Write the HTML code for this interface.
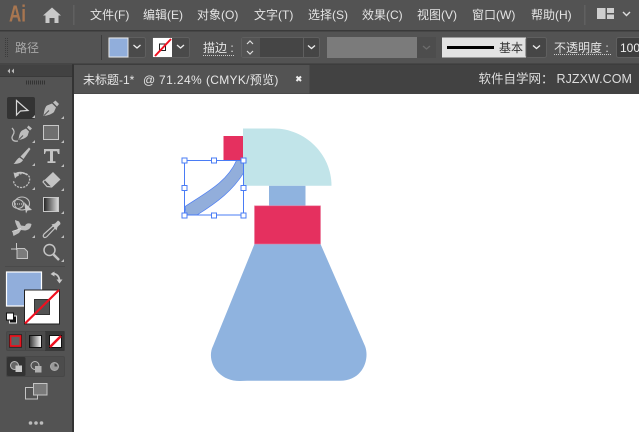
<!DOCTYPE html>
<html><head><meta charset="utf-8">
<style>
html,body{margin:0;padding:0;background:#fff;width:639px;height:432px;overflow:hidden}
svg{display:block}
text{font-family:"Liberation Sans","Noto Sans CJK SC",sans-serif}
</style></head><body>
<svg width="639" height="432" viewBox="0 0 639 432" xmlns="http://www.w3.org/2000/svg">
<defs><linearGradient id="g" x1="0" x2="1"><stop offset="0" stop-color="#222"/><stop offset="1" stop-color="#ddd"/></linearGradient>
<linearGradient id="g2" x1="0" x2="1"><stop offset="0" stop-color="#333"/><stop offset="1" stop-color="#fff"/></linearGradient></defs>
<!-- base -->
<rect width="639" height="432" fill="#fff"/>
<rect width="639" height="30" fill="#535353"/>
<rect y="30" width="639" height="1.5" fill="#3a3a3a"/>
<rect y="31.5" width="639" height="32" fill="#535353"/>
<rect y="63.5" width="639" height="1" fill="#383838"/>
<rect y="64.5" width="639" height="29.5" fill="#424242"/>
<rect x="73.5" y="65" width="236" height="28.5" fill="#535353"/>
<rect x="0" y="64.5" width="72" height="368" fill="#535353"/>
<rect x="0" y="65" width="72" height="11" fill="#424242"/>
<rect x="0" y="76" width="72" height="1" fill="#3a3a3a"/>
<rect x="72" y="64.5" width="2" height="368" fill="#333"/>

<!-- menu bar -->
<text x="9" y="21.500" font-size="23" font-weight="bold" textLength="17" lengthAdjust="spacingAndGlyphs" fill="#a87650">Ai</text>
<path d="M43 15.500 L52 7.500 L61 15.500 L58.500 15.500 V23 H54.500 V18 H49.500 V23 H45.500 V15.500 Z" fill="#c8c8c8"/>
<rect x="73" y="5" width="1.500" height="20" fill="#606060"/>
<g font-size="12" fill="#e4e4e4">
<text x="90" y="19">文件(F)</text>
<text x="143" y="19">编辑(E)</text>
<text x="197" y="19">对象(O)</text>
<text x="254" y="19">文字(T)</text>
<text x="308" y="19">选择(S)</text>
<text x="362" y="19">效果(C)</text>
<text x="417" y="19">视图(V)</text>
<text x="472" y="19">窗口(W)</text>
<text x="531" y="19">帮助(H)</text>
</g>
<rect x="584" y="5" width="1.500" height="20" fill="#606060"/>
<path d="M597 8h8.500v11h-8.500zM607 8h7v5h-7zM607 14.500h7v4.500h-7z" fill="#cfcfcf"/>
<path d="M623 12 l3.500 3.500 l3.500 -3.500" fill="none" stroke="#ddd" stroke-width="1.400"/>

<!-- control bar -->
<path d="M5.500 38v19M7.500 38v19" stroke="#3c3c3c" stroke-width="1" stroke-dasharray="1 1"/>
<text x="15" y="52" font-size="12" fill="#a8a8a8">路径</text>
<rect x="101" y="35" width="1" height="25" fill="#3d3d3d"/>
<rect x="108.500" y="37.500" width="37" height="20" rx="2" fill="#4a4a4a" stroke="#5f5f5f"/>
<rect x="109" y="38" width="19" height="19" fill="#91aedb" stroke="#e8e8e8"/>
<path d="M133.500 45 l3.500 3 l3.500 -3" fill="none" stroke="#eee" stroke-width="1.300"/>
<rect x="152.500" y="37.500" width="37" height="20" rx="2" fill="#4a4a4a" stroke="#5f5f5f"/>
<rect x="153" y="38" width="19" height="19" fill="#fff"/>
<rect x="159.500" y="44" width="6" height="6.500" fill="none" stroke="#222" stroke-width="1"/>
<path d="M155 56 L171 39" stroke="#f01020" stroke-width="2"/>
<path d="M177 45 l3.500 3 l3.500 -3" fill="none" stroke="#eee" stroke-width="1.300"/>
<text x="203" y="52" font-size="12" fill="#e4e4e4">描边 :</text>
<path d="M203 55.500h32" stroke="#ccc" stroke-width="1" stroke-dasharray="1 1"/>
<rect x="241.500" y="37.500" width="78" height="20" rx="2" fill="#454545" stroke="#5f5f5f"/>
<rect x="242" y="38" width="18" height="19" fill="#535353"/>
<rect x="303" y="38" width="1" height="19" fill="#5f5f5f"/>
<path d="M247 44l3-3 3 3M247 51l3 3 3-3" fill="none" stroke="#ddd" stroke-width="1.200"/>
<path d="M308 45.500 l3.500 3 l3.500 -3" fill="none" stroke="#eee" stroke-width="1.300"/>
<rect x="327" y="37" width="90" height="21" fill="#7b7b7b"/>
<rect x="417" y="37" width="19" height="21" fill="#4d4d4d"/>
<path d="M423 46l3.500 3 3.500-3" fill="none" stroke="#6c6c6c" stroke-width="1.300"/>
<rect x="442" y="37.500" width="84" height="20" fill="#e2e2e2"/>
<rect x="526" y="37.500" width="20.500" height="20" rx="2" fill="#464646" stroke="#5f5f5f"/>
<rect x="447" y="46" width="47" height="3" fill="#000"/>
<text x="499" y="52" font-size="12" fill="#333">基本</text>
<path d="M533 45.500l3.500 3 3.500-3" fill="none" stroke="#eee" stroke-width="1.300"/>
<text x="554" y="52" font-size="12" fill="#e4e4e4">不透明度 :</text>
<path d="M554 54.500h57" stroke="#ccc" stroke-width="1" stroke-dasharray="1 1"/>
<rect x="616.500" y="37.500" width="30" height="20" rx="2" fill="#3e3e3e" stroke="#5f5f5f"/>
<text x="620" y="52" font-size="12" fill="#eee">100%</text>

<!-- tab bar -->
<g font-size="12" fill="#e6e6e6">
<text x="83" y="84">未标题-1*</text>
<text x="143" y="84">@</text>
<text x="159" y="84" letter-spacing=".4">71.24%</text>
<text x="206" y="84" letter-spacing=".3">(CMYK/预览)</text>
</g>
<path d="M296.500 76.500l4.500 4.500M301 76.500l-4.500 4.500" stroke="#eee" stroke-width="2"/>
<text x="478.500" y="83" font-size="12.500" fill="#dedede">软件自学网：</text>
<text x="556.500" y="83" font-size="12.500" letter-spacing=".05" fill="#dedede">RJZXW.COM</text>

<!-- toolbar head -->
<path d="M10 68.500l-2.500 2.500 2.500 2.500zM14 68.500l-2.500 2.500 2.500 2.500z" fill="#bbb"/>
<path d="M26.500 80.500v4M28.500 80.500v4M30.500 80.500v4M32.500 80.500v4M34.500 80.500v4M36.500 80.500v4M38.500 80.500v4M40.500 80.500v4M42.500 80.500v4M44.500 80.500v4" stroke="#333" stroke-width="1"/>

<!-- tools -->
<rect x="7" y="97" width="28" height="22" rx="2" fill="#333"/>
<path d="M16.500 100.500 L16.500 115 L20.500 111 L28 110.500 Z" fill="none" stroke="#d8d8d8" stroke-width="1.200"/>
<g fill="#bdbdbd">
<path d="M35 115l-3 3h3z M64 116l-3 3h3z M35 140l-3 3h3z M64 140l-3 3h3z M35 163l-3 3h3z M64 164l-3 3h3z M35 187l-3 3h3z M64 188l-3 3h3z M64 211l-3 3h3z M35 235l-3 3h3z M64 235l-3 3h3z M64 259l-3 3h3z"/>
</g>
<!-- pen -->
<path d="M43.500 116 C44 111 45 107 47 105.500 L52 103.500 L56 107.500 L54 112 C52 114 48 115.500 43.500 116Z" fill="#bdbdbd"/>
<path d="M53 102.500 L55.500 100.500 L59 104 L57 106.500Z" fill="#bdbdbd"/>
<path d="M44 115.500 l5-5" stroke="#535353" stroke-width="1"/>
<!-- curvature pen -->
<path d="M18.500 140 C19 135 20 132 22 130.500 L26 128.500 L29 131.500 L27.500 136 C25 138.500 22 139.500 18.500 140Z" fill="#bdbdbd"/>
<path d="M27 127.500 L28.500 125.500 L32 128.500 L30 130.500Z" fill="#bdbdbd"/>
<path d="M19 139.500 l4-4" stroke="#535353" stroke-width="1"/>
<path d="M18 141c-6 1-7-3-5-6 2-3 1-5-1-7" fill="none" stroke="#bdbdbd" stroke-width="1.300"/>
<!-- rect tool -->
<rect x="43.500" y="125.500" width="15" height="14" fill="#6f6f6f" stroke="#c8c8c8" stroke-width="1"/>
<!-- brush -->
<path d="M29 147.500l1.500 1.500 -7 10 -3-2.500z" fill="#c0c0c0"/>
<path d="M19.500 157.500l3.500 2.500c-1 2.500-4.500 4-9.500 4 2-1.500 3-5 6-6.500z" fill="#c0c0c0"/>
<!-- type -->
<path d="M44 149h15.500v5h-1.500l-1-2.800h-4v10h2.500v1.800h-8v-1.800h2.500v-10h-4l-1 2.800h-1z" fill="#c4c4c4"/>
<!-- rotate -->
<path d="M17 176c4-4 11-3.500 12.500 1.500 1 5-3 10-8 10-5 0-7.500-3-8-6.500" fill="none" stroke="#bdbdbd" stroke-width="1.300" stroke-dasharray="2.200 1"/>
<path d="M13.500 172.500l6 1 -4.500 5z" fill="#c4c4c4"/>
<path d="M16 173.500c3-1.500 8-1.500 11 1.500" fill="none" stroke="#c4c4c4" stroke-width="1.500"/>
<!-- eraser -->
<path d="M53 172l7.500 7.500 -8.500 8 -7.500-7.500z" fill="#c4c4c4"/>
<path d="M44.500 180l-1.500 2 4 4.500 5 .5" fill="none" stroke="#c4c4c4" stroke-width="1.200"/>
<!-- shape builder -->
<ellipse cx="18" cy="204" rx="5.500" ry="4.500" fill="none" stroke="#bdbdbd" stroke-width="1.100"/>
<ellipse cx="22" cy="203.500" rx="7.500" ry="6.500" fill="none" stroke="#bdbdbd" stroke-width="1.100"/>
<path d="M15 204h8" stroke="#ddd" stroke-width="1" stroke-dasharray="1 1"/>
<path d="M24 202l8 8 -4.500 .5 -1.500 3z" fill="#c8c8c8"/>
<!-- gradient -->
<rect x="43.500" y="197.500" width="15" height="14" fill="url(#g)" stroke="#c8c8c8" stroke-width="1"/>
<!-- puppet warp -->
<path d="M12.500 232 L18 229 C17 226 15 223 15 220 L19 221.500 L21 225.500 L25 226 C26 223 29 223 31.500 224 C31 227 30 229 27 230 C25 231 23 230 21 230 L19 233 L13.500 236 Z" fill="#bdbdbd"/>
<path d="M12 231.500l9-3" stroke="#ddd" stroke-width=".8"/>
<!-- eyedropper -->
<path d="M53 226l-9 8c-1 1.500-1 2.800 0 3.300 1 .5 2 .2 3-.8l9-9.500z" fill="none" stroke="#c4c4c4" stroke-width="1.200"/>
<path d="M51.500 224.500l3.500-1 3-3 2 1.500 .5 2-3 3-1 3.500z" fill="#c4c4c4"/>
<!-- artboard -->
<path d="M11 249h7M16.500 243v7" stroke="#c8c8c8" stroke-width="1"/>
<path d="M17 248.500h7.500l3 3v7h-10.500z" fill="#7b7b7b" stroke="#c4c4c4" stroke-width="1"/>
<!-- zoom -->
<circle cx="49.500" cy="250" r="5.500" fill="none" stroke="#c4c4c4" stroke-width="1.500"/>
<path d="M53.500 254.500l5.500 5.500" stroke="#c4c4c4" stroke-width="2.500"/>
<rect x="5" y="266" width="60" height="1" fill="#4a4a4a"/>

<!-- fill and stroke -->
<rect x="6.500" y="272" width="35" height="34" fill="#91aedb" stroke="#fff" stroke-width="1.200"/>
<rect x="24.500" y="290" width="35" height="34" fill="#fff" stroke="#222" stroke-width="1"/>
<rect x="34.500" y="299.500" width="15" height="15" fill="#535353" stroke="#333" stroke-width="1"/>
<path d="M25 323.500L59 290" stroke="#f01020" stroke-width="2.200"/>
<path d="M52 273.500c4 0 7 2 7.500 7" fill="none" stroke="#c8c8c8" stroke-width="1.800"/>
<path d="M50.500 274l4-2.500v5zM56.500 279.500h6l-3 4z" fill="#c8c8c8"/>
<rect x="9.500" y="316" width="7" height="7" fill="#111" stroke="#eee" stroke-width="1"/>
<rect x="6.500" y="313" width="7" height="7" fill="#fff" stroke="#111" stroke-width="1"/>

<!-- mode buttons -->
<rect x="6.500" y="331.500" width="58" height="19" rx="1.500" fill="#4c4c4c" stroke="#474747"/>
<rect x="45" y="331" width="19.500" height="20" fill="#383838"/>
<rect x="25" y="332" width=".8" height="18" fill="#414141"/><rect x="45" y="332" width=".8" height="18" fill="#414141"/>
<rect x="9" y="334.500" width="13" height="13" fill="#111"/>
<rect x="10.500" y="336" width="10" height="10" fill="#606060" stroke="#e8141f" stroke-width="1.800"/>
<rect x="29.500" y="335.500" width="12" height="12" fill="url(#g2)" stroke="#111" stroke-width="1"/>
<rect x="49.500" y="335.500" width="12" height="12" fill="#fff" stroke="#111" stroke-width="1"/>
<path d="M50 347L61 336" stroke="#f01020" stroke-width="2.600"/>

<!-- draw modes -->
<rect x="6.500" y="356.500" width="58" height="20" rx="1.500" fill="#4c4c4c" stroke="#474747"/>
<rect x="7" y="357" width="18.500" height="19" rx="1.500" fill="#333"/>
<circle cx="14.500" cy="365.500" r="4" fill="#666" stroke="#bbb"/>
<rect x="15.500" y="365.500" width="6.500" height="6.500" fill="#c8c8c8"/>
<circle cx="35" cy="365.500" r="4" fill="#535353" stroke="#bbb"/>
<rect x="35" y="366" width="6.500" height="6.500" fill="#b0b0b0"/>
<circle cx="54.500" cy="366.500" r="4" fill="#999" stroke="#aaa"/>
<path d="M54.500 366.500v-3a3.200 3.200 0 0 1 3 3z" fill="#444"/>

<!-- screen mode -->
<rect x="25.500" y="387.500" width="12" height="11.500" fill="#535353" stroke="#c4c4c4" stroke-width="1"/>
<rect x="33.500" y="383.500" width="13.500" height="11.500" fill="#7a7a7a" stroke="#c4c4c4" stroke-width="1"/>
<circle cx="30.500" cy="423" r="1.800" fill="#bbb"/><circle cx="36" cy="423" r="1.800" fill="#bbb"/><circle cx="41.500" cy="423" r="1.800" fill="#bbb"/>

<!-- artwork -->
<rect x="223.500" y="136" width="20" height="24" fill="#e5305f"/>
<path d="M243 128.500H274C305 128.500 331.500 154 331.500 185.800H243Z" fill="#c1e4e9"/>
<rect x="269" y="185.800" width="36.500" height="21" fill="#8fb3df"/>
<path d="M254.500 244H320.500L365 346C370 359 363 380.800 340 380.800H247L240 381C217 381 206 360 213 346Z" fill="#8fb3df"/>
<rect x="254.500" y="205.800" width="66" height="38.200" fill="#e5305f" stroke="#ea7a9c" stroke-width=".6"/>

<!-- selected path -->
<path d="M236.500 160.500H243.500V173C233 190 218 202 197 215H186L185 206.500C207 192 227 182 236.500 160.500Z" fill="#92aedb" stroke="#4a7cf5" stroke-width=".7"/>
<rect x="184.500" y="160.500" width="59" height="54.500" fill="none" stroke="#4a7cf5" stroke-width="1"/>
<g fill="#fff" stroke="#4a7cf5" stroke-width="1">
<rect x="182" y="158" width="5" height="5"/>
<rect x="211.500" y="158" width="5" height="5"/>
<rect x="241" y="158" width="5" height="5"/>
<rect x="182" y="185.500" width="5" height="5"/>
<rect x="241" y="185.500" width="5" height="5"/>
<rect x="182" y="213" width="5" height="5"/>
<rect x="211.500" y="213" width="5" height="5"/>
<rect x="241" y="213" width="5" height="5"/>
</g>
</svg>
</body></html>
